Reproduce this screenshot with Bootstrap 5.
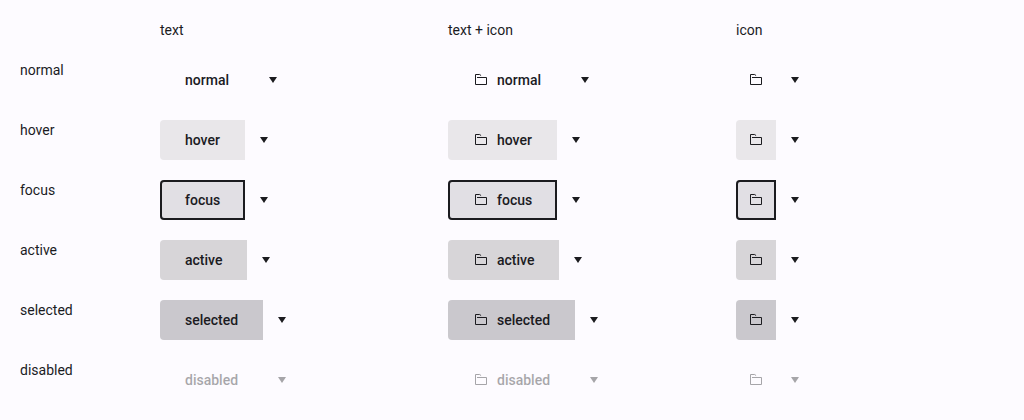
<!DOCTYPE html>
<html lang="en">
<head>
<meta charset="utf-8">
<title>Split buttons</title>
<link href="https://cdn.jsdelivr.net/npm/bootstrap@5.3.0/dist/css/bootstrap.min.css" rel="stylesheet">
<style>
body{background:#fdfbff;color:#1b1b1f;font:400 14px/20px Roboto,sans-serif}
.states{display:grid;grid-template-columns:140px 288px 288px 288px;grid-template-rows:40px repeat(6,60px);padding:20px 0 0 20px;height:420px}
.split-main{--bs-btn-font-size:14px;--bs-btn-font-weight:500;--bs-btn-line-height:20px;--bs-btn-color:#1b1b1f;--bs-btn-disabled-color:#1b1b1f;--bs-btn-disabled-opacity:.38;--bs-btn-padding-x:25px;--bs-btn-padding-y:0;--bs-btn-border-width:0;--bs-btn-border-radius:4px;height:40px;gap:8px}
.split-main.icon-only{--bs-btn-padding-x:12px}
.split-arrow{--bs-btn-color:#1b1b1f;--bs-btn-disabled-color:#1b1b1f;--bs-btn-disabled-opacity:.38;--bs-btn-padding-x:16px;--bs-btn-padding-y:0;--bs-btn-border-width:0;height:40px}
.split-main.is-hover{background:#e9e7ea}
.split-main.is-focus{background:#e1dfe4;box-shadow:inset 0 0 0 2px #1b1b1f}
.split-main.is-active{background:#d7d5d8}
.split-main.is-selected{background:#cac8cd}
</style>
</head>
<body>
<svg class="d-none">
<symbol id="folder" viewBox="0 0 16 16"><path d="M4 5.5h9.5v7h-11v-10h4.2l1.4 1.1" fill="none" stroke="currentColor"/></symbol>
<symbol id="caret" viewBox="0 0 8 6"><path d="M0 0h8L4 6z" fill="currentColor"/></symbol>
</svg>
<main class="states" id="states">
<div></div><div>text</div><div>text + icon</div><div>icon</div>
</main>
<script src="https://cdn.jsdelivr.net/npm/bootstrap@5.3.0/dist/js/bootstrap.bundle.min.js"></script>
<script>
const folder = '<svg width="16" height="16" aria-hidden="true"><use href="#folder"/></svg>';
const caret = '<svg width="8" height="6" aria-hidden="true"><use href="#caret"/></svg>';
function split(state, content, extra) {
  const off = state === 'disabled' ? 'disabled' : '';
  return `<div class="btn-group align-self-start" style="width:max-content">
    <button type="button" ${off} class="btn split-main d-flex align-items-center is-${state} ${extra}" aria-label="${state}">${content}</button>
    <button type="button" ${off} class="btn split-arrow d-flex align-items-center" aria-label="Open menu">${caret}</button></div>`;
}
document.getElementById('states').insertAdjacentHTML('beforeend',
  ['normal', 'hover', 'focus', 'active', 'selected', 'disabled'].map(s =>
    `<div>${s}</div>` + split(s, `<span>${s}</span>`, '') + split(s, `${folder}<span>${s}</span>`, '') + split(s, folder, 'icon-only')
  ).join(''));
</script>
</body>
</html>
